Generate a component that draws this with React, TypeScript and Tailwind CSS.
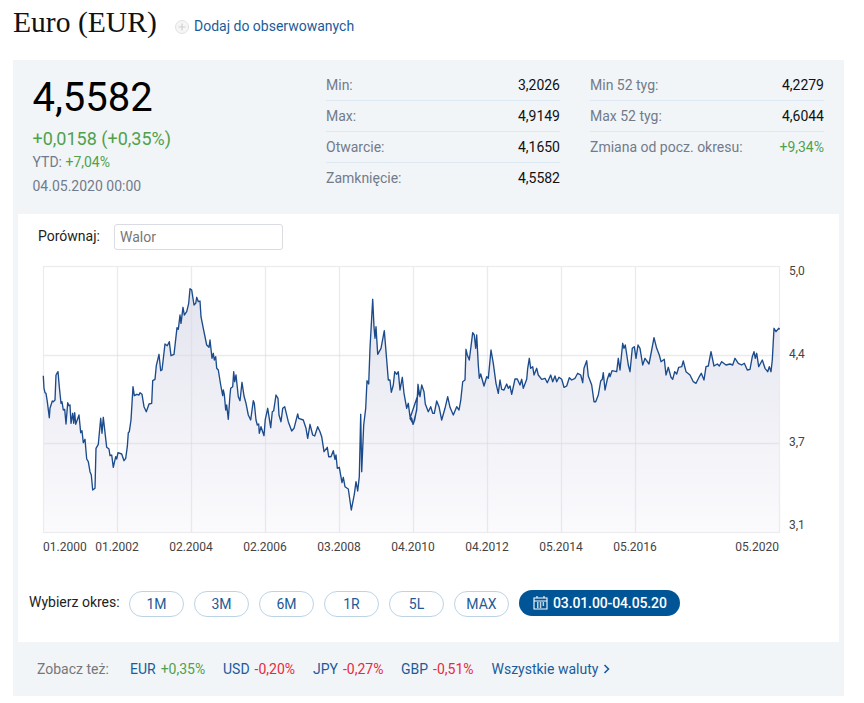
const z5: number[][] = [[40,347],[42,385],[45,398],[48,400],[52,425],[58,473],[60,445],[67,423],[70,425],[75,420],[78,345],[84,335],[88,380],[93,430],[96,425],[100,450],[104,448],[108,492],[113,428],[117,437],[120,435],[123,490],[128,460],[131,490],[134,458],[137,493],[147,465],[152,518],[156,512],[160,548],[165,538],[170,597],[175,605],[180,635],[184,645],[188,690],[195,685],[198,565],[205,553],[212,475],[216,520],[220,472],[230,562],[237,567],[240,587],[245,585],[250,622],[257,590],[260,597],[264,578],[275,582],[282,602],[287,595],[292,560],[295,518],[298,515],[303,480],[309,380],[313,407],[320,403],[327,405],[330,398],[336,403],[342,440],[349,455],[357,432],[365,430],[368,362],[375,358],[379,317],[387,283],[392,332],[396,330],[405,252],[412,257],[418,245],[423,287],[432,283],[441,203],[445,208],[450,165],[453,190],[459,142],[463,165],[470,155],[476,130],[480,86],[485,90],[492,135],[497,130],[500,112],[505,125],[510,123],[513,170],[520,205],[530,255],[537,262],[540,240],[546,295],[550,280],[553,300],[557,290],[560,325],[565,330],[572,375],[578,407],[580,390],[583,403],[587,450],[590,435],[595,478]];
const z6: number[][] = [[30,405],[32,385],[38,380],[41,335],[44,365],[48,345],[55,410],[60,422],[66,367],[72,408],[78,430],[85,465],[92,480],[100,422],[103,430],[108,480],[112,495],[116,492],[118,520],[123,500],[132,527],[136,478],[143,445],[152,503],[157,455],[161,452],[168,405],[174,415],[177,465],[183,485],[188,445],[194,440],[205,485],[215,513],[222,505],[233,462],[236,475],[250,480],[258,505],[263,535],[270,493],[278,525],[284,528],[293,500],[300,515],[305,530],[312,575],[322,562],[326,590],[333,590],[340,572],[345,598],[348,585],[352,625],[358,622],[366,668],[370,652],[375,680],[385,687],[394,750],[403,703],[408,665],[413,693],[418,650],[422,463],[425,635],[431,495],[437,445],[441,362],[446,372],[450,265],[458,118],[462,200],[465,235],[468,200],[473,283],[483,265],[493,212],[500,300],[505,360],[510,360],[514,397],[520,375],[524,335],[530,343],[535,335],[540,390],[547,352],[552,400],[560,445],[565,430],[570,470],[575,475],[579,493],[584,480],[590,447],[594,373],[597,395]];
const z7: number[][] = [[0,355],[10,372],[20,330],[24,255],[30,290],[35,255],[42,275],[46,312],[55,335],[62,320],[68,340],[73,340],[80,303],[87,320],[95,360],[105,325],[113,290],[120,322],[130,345],[140,320],[147,330],[152,302],[158,245],[165,240],[168,148],[172,165],[178,180],[188,98],[193,105],[197,145],[200,105],[205,195],[208,235],[212,222],[222,258],[230,230],[235,235],[243,150],[250,190],[258,250],[265,280],[270,240],[275,268],[282,270],[290,252],[295,265],[300,258],[305,283],[315,237],[322,237],[330,255],[335,238],[340,265],[350,238],[353,205],[358,175],[362,205],[368,200],[372,225],[380,205],[385,225],[395,238],[405,235],[412,248],[422,225],[428,245],[435,228],[440,245],[447,232],[455,238],[462,262],[470,258],[478,233],[485,240],[495,235],[503,220],[512,225],[518,248],[522,205],[530,182],[535,228],[545,255],[552,305],[557,305],[565,285],[572,243],[577,238],[580,218],[585,270],[592,238],[598,220]];
const z8: number[][] = [[30,350],[36,332],[50,335],[55,295],[60,330],[68,250],[72,265],[76,255],[85,315],[90,335],[97,265],[103,260],[108,295],[114,255],[120,265],[128,315],[135,295],[147,312],[155,270],[162,233],[170,265],[178,285],[183,305],[193,298],[198,345],[205,322],[213,352],[218,358],[224,335],[230,342],[236,322],[245,320],[250,303],[258,335],[270,345],[280,365],[288,370],[298,350],[304,340],[312,360],[318,320],[325,318],[333,275],[342,318],[352,312],[358,318],[365,305],[378,315],[390,312],[398,315],[405,295],[415,310],[425,315],[433,310],[442,330],[450,328],[457,290],[462,275],[466,295],[470,280],[476,320],[487,300],[495,325],[503,335],[508,320],[513,335],[517,300],[522,205],[528,215],[536,205],[539,208]];

const conv = (pts: number[][], ox: number, oy: number) => pts.map(([x, y]) => [ox + x / 3, oy + y / 3]);
const all = [...conv(z5, 30, 260), ...conv(z6, 220, 260), ...conv(z7, 410, 300), ...conv(z8, 600, 260)];
const line = all.map(([x, y]) => `${x.toFixed(1)},${y.toFixed(1)}`).join(" ");
const area = `43,532 ${line} 779.5,532`;

const verticals = [117.5, 191.5, 265.5, 339.5, 413.5, 487.5, 561.5, 635.5];
const xLabels: [string, number][] = [["02.2004", 191], ["02.2006", 265], ["03.2008", 339], ["04.2010", 413], ["04.2012", 487], ["05.2014", 561], ["05.2016", 635], ["01.2002", 117]];
const yLabels: [string, number][] = [["5,0", 275], ["4,4", 358], ["3,7", 446], ["3,1", 529]];

function Chart() {
  return (
    <svg viewBox="18 256 821 304" className="block w-[821px] h-[304px] mt-[6px]">
      <defs>
        <linearGradient id="fillArea" gradientUnits="userSpaceOnUse" x1="0" y1="290" x2="0" y2="532">
          <stop offset="0" stopColor="#e4e4ef" />
          <stop offset="1" stopColor="#fbfbfd" />
        </linearGradient>
      </defs>
      <polygon points={area} fill="url(#fillArea)" />
      {verticals.map((x) => (
        <line key={x} x1={x} x2={x} y1={266} y2={532} stroke="#d9d9e3" strokeOpacity="0.55" strokeWidth="1.3" />
      ))}
      <line x1={43} x2={779} y1={355.5} y2={355.5} stroke="#d9d9e3" strokeOpacity="0.55" strokeWidth="1.3" />
      <line x1={43} x2={779} y1={443.5} y2={443.5} stroke="#d9d9e3" strokeOpacity="0.55" strokeWidth="1.3" />
      <rect x={43.5} y={266.5} width={736} height={266} fill="none" stroke="#ececf0" strokeWidth="1.2" />
      <polyline points={line} fill="none" stroke="#1c4b8c" strokeWidth="1.35" strokeLinejoin="round" />
      <g fontFamily="Roboto, sans-serif" fontSize="12" fill="#444">
        <text x={43} y={551}>01.2000</text>
        {xLabels.map(([t, x]) => (
          <text key={t} x={x} y={551} textAnchor="middle">{t}</text>
        ))}
        <text x={779} y={551} textAnchor="end">05.2020</text>
        {yLabels.map(([t, y]) => (
          <text key={t} x={789} y={y}>{t}</text>
        ))}
      </g>
    </svg>
  );
}

function Row({ label, value, last, green }: { label: string; value: string; last?: boolean; green?: boolean }) {
  return (
    <div className={`flex justify-between items-center h-[31px] ${last ? "" : "border-b border-[#dde8f2]"}`}>
      <span className="text-[#717b8a]">{label}</span>
      <span className={green ? "text-[#4fa14c]" : "text-[#111]"}>{value}</span>
    </div>
  );
}

function Pill({ children }: { children: string }) {
  return (
    <button className="w-[55px] h-[26px] rounded-full border border-[#bcd3e6] text-[#1d5a96] text-[14px] leading-none bg-white">
      {children}
    </button>
  );
}

function Quote({ name, value, up }: { name: string; value: string; up?: boolean }) {
  return (
    <span className="whitespace-nowrap text-[#1a5c9a]">
      {name}<span className={`ml-[5px] ${up ? "text-[#4fa14c]" : "text-[#e8293c]"}`}>{value}</span>
    </span>
  );
}

export default function App() {
  return (
    <div className="w-[864px] h-[703px] bg-white font-['Roboto',sans-serif] text-[14px] overflow-hidden">
      <div className="h-[60px] pl-[13px] flex items-start">
        <h1 className="font-['Liberation_Serif',serif] text-[29.6px] leading-[38px] mt-[3px] text-[#111] w-[162px]">Euro (EUR)</h1>
        <a className="flex items-center text-[#1a5c9a] mt-[18px] leading-[17px]">
          <svg width="14" height="14" viewBox="0 0 14 14" className="mr-[5px]">
            <circle cx="7" cy="7" r="6.5" fill="#f6f6f6" stroke="#e0e0e0" />
            <path d="M7 3.5v7M3.5 7h7" stroke="#cfcfcf" strokeWidth="1.2" />
          </svg>
          Dodaj do obserwowanych
        </a>
      </div>
      <div className="ml-[13px] w-[831px] h-[636px] bg-[#f2f5f8] flex flex-col">
        <div className="h-[154px] flex">
          <div className="w-[313px] pl-[19.5px] pt-[12px]">
            <div className="text-[40px] leading-[52px] text-black">4,5582</div>
            <div className="text-[18px] leading-[24px] mt-[3px] text-[#4fa14c]">+0,0158 (+0,35%)</div>
            <div className="leading-[18px] mt-[2px] text-[#717b8a]">YTD: <span className="text-[#4fa14c]">+7,04%</span></div>
            <div className="leading-[18px] mt-[6px] text-[#717b8a]">04.05.2020 00:00</div>
          </div>
          <div className="w-[234px] pt-[10px]">
            <Row label="Min:" value="3,2026" />
            <Row label="Max:" value="4,9149" />
            <Row label="Otwarcie:" value="4,1650" />
            <Row label="Zamknięcie:" value="4,5582" last />
          </div>
          <div className="w-[234px] ml-[30px] pt-[10px]">
            <Row label="Min 52 tyg:" value="4,2279" />
            <Row label="Max 52 tyg:" value="4,6044" />
            <Row label="Zmiana od pocz. okresu:" value="+9,34%" last green />
          </div>
        </div>
        <div className="mx-[5px] h-[428px] bg-white pt-[10px]">
          <div className="flex items-center pl-[20px] h-[26px]">
            <span className="w-[76px] text-[#222] -mt-[1px]">Porównaj:</span>
            <input
              placeholder="Walor"
              className="w-[169px] h-[26px] border border-[#d9dce3] rounded-[3px] pl-[5px] text-[14px] bg-white placeholder:text-[#777]"
            />
          </div>
          <Chart />
          <div className="flex items-center pl-[11px] mt-[30px] h-[27px]">
            <span className="w-[100px] text-[#222] whitespace-nowrap -mt-[2px]">Wybierz okres:</span>
            <div className="flex gap-[10px]">
              <Pill>1M</Pill>
              <Pill>3M</Pill>
              <Pill>6M</Pill>
              <Pill>1R</Pill>
              <Pill>5L</Pill>
              <Pill>MAX</Pill>
            </div>
            <button className="ml-[10px] w-[161px] h-[26px] -mt-[1px] rounded-full bg-[#005596] text-white text-[14px] font-medium tracking-[-0.12px] flex items-center pl-[14px] leading-none">
              <svg width="15" height="15" viewBox="0 0 15 15" className="mr-[5px] -mt-[2px]" fill="none" stroke="#fff" strokeWidth="1.1">
                <path d="M1 3h13v11h-13zM1 6h13M4 1v2.5M11 1v2.5" />
                <path d="M4 8h1.5M6.8 8h1.5M9.6 8h1.5M4 10h1.5M6.8 10h1.5M9.6 10h1.5M4 12h1.5M6.8 12h1.5" strokeWidth="1.3" />
              </svg>
              03.01.00-04.05.20
            </button>
          </div>
        </div>
        <div className="flex items-center h-[54px] pl-[24px]">
          <span className="w-[93px] text-[#777]">Zobacz też:</span>
          <div className="w-[93px]"><Quote name="EUR" value="+0,35%" up /></div>
          <div className="w-[90px]"><Quote name="USD" value="-0,20%" /></div>
          <div className="w-[88px]"><Quote name="JPY" value="-0,27%" /></div>
          <div className="w-[90.5px]"><Quote name="GBP" value="-0,51%" /></div>
          <a className="flex items-center text-[#1a5c9a]">
            Wszystkie waluty
            <svg width="7" height="10" viewBox="0 0 7 10" className="ml-[5px]" fill="none" stroke="#1a5c9a" strokeWidth="1.6">
              <path d="M1.5 1l4 4-4 4" />
            </svg>
          </a>
        </div>
      </div>
    </div>
  );
}
